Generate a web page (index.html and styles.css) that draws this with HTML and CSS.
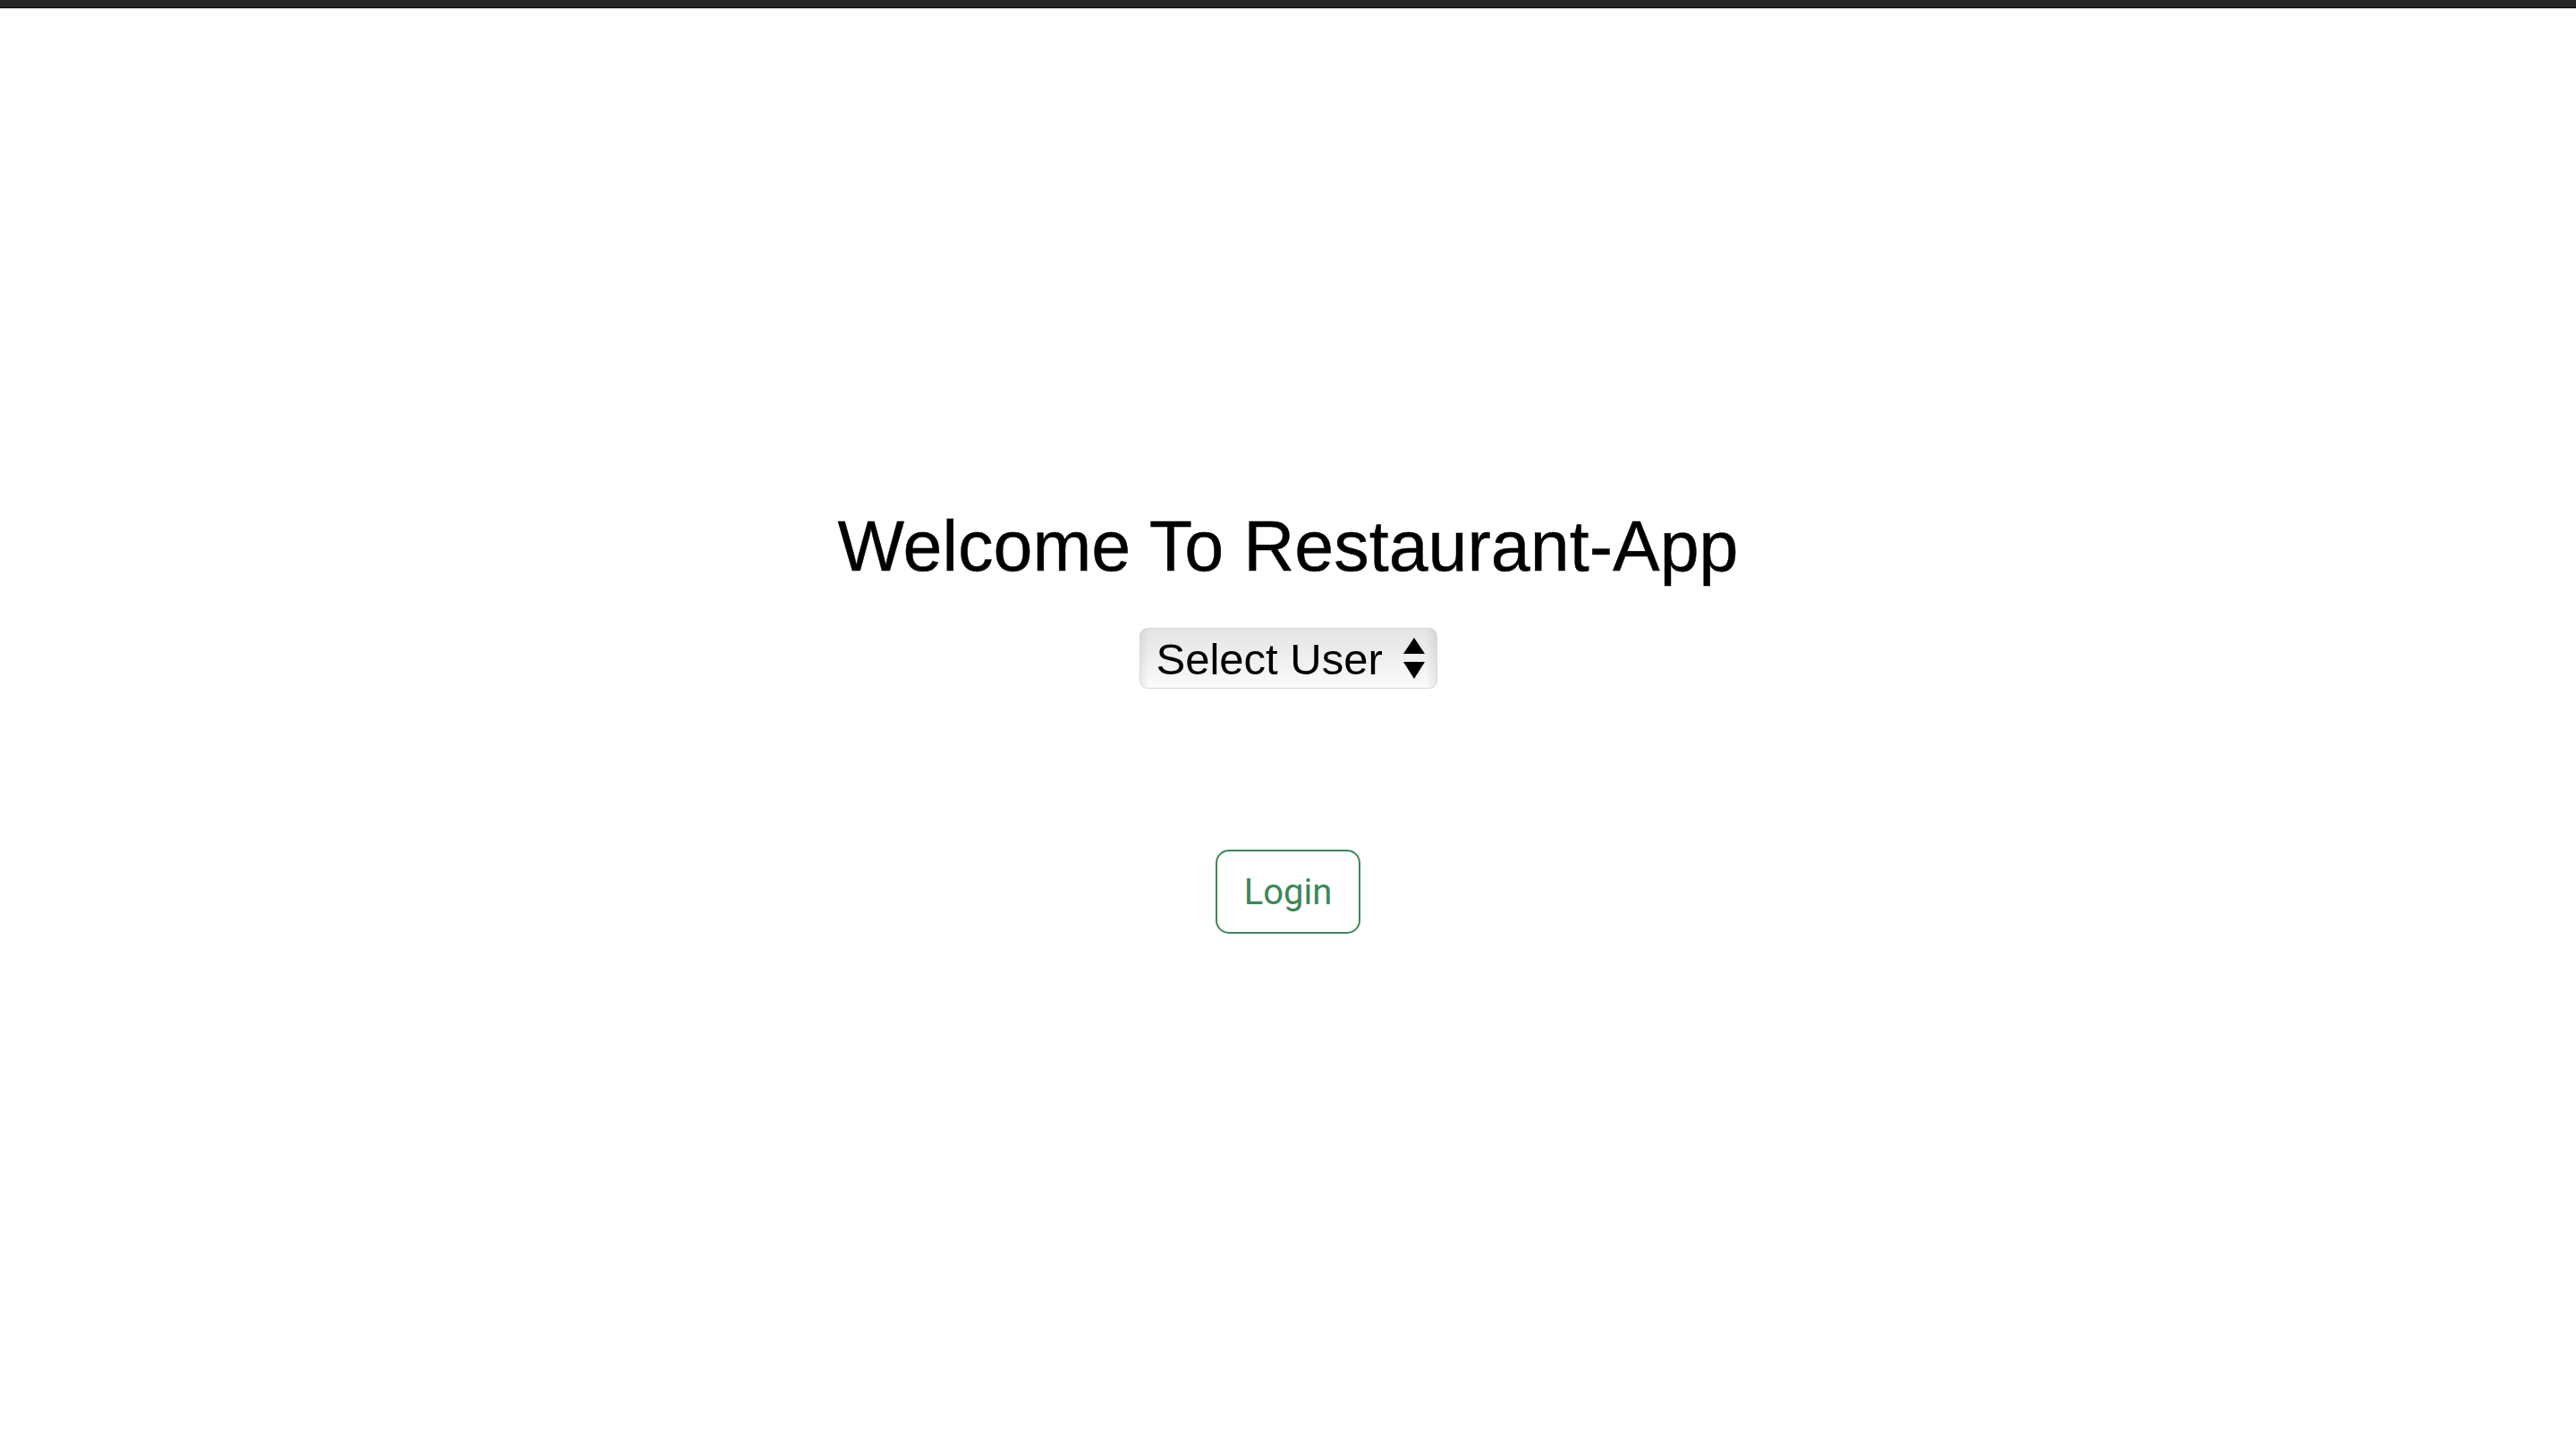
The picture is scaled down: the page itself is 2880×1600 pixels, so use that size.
FILE: index.html
```html
<!DOCTYPE html>
<html lang="en">
<head>
<meta charset="utf-8">
<title>Restaurant-App</title>
<link rel="stylesheet" href="styles.css">
</head>
<body>
<div class="topbar"></div>
<main class="page">
  <h1 class="title">Welcome To Restaurant-App</h1>
  <div class="select">
    <span class="select-label">Select User</span>
    <svg class="select-arrows" width="24" height="46" viewBox="0 0 24 46" aria-hidden="true">
      <polygon points="12,0 24,18 0,18" fill="#000"/>
      <polygon points="0,27 24,27 12,46" fill="#000"/>
    </svg>
  </div>
  <button class="login" type="button">Login</button>
</main>
</body>
</html>
```
FILE: styles.css
```css
html, body {
  margin: 0;
  padding: 0;
  background: #fff;
}

.topbar {
  height: 8px;
  background: #262626;
  border-bottom: 1px solid #000;
  box-shadow: 0 1px 0 #c4c4c4;
}

.page {
  height: 1591px;
  display: flex;
  flex-direction: column;
  align-items: center;
  justify-content: center;
}

.title {
  margin: 0;
  font-family: "Liberation Sans", Arial, sans-serif;
  font-weight: 400;
  font-size: 79px;
  line-height: 90px;
  color: #000;
  -webkit-text-stroke: 0.4px #000;
}

.select {
  margin-top: 46px;
  box-sizing: border-box;
  width: 333px;
  height: 68px;
  display: flex;
  align-items: center;
  justify-content: space-between;
  padding: 3px 13px 0 18px;
  border: 1px solid #d6d8da;
  border-radius: 9px;
  background:
    linear-gradient(to right, rgba(0,0,0,0.06), rgba(0,0,0,0) 10px, rgba(0,0,0,0) calc(100% - 12px), rgba(0,0,0,0.07)),
    linear-gradient(to bottom, #e4e4e4, #f0f0f0 55%, #fbfbfb);
}

.select-label {
  font-family: "Liberation Sans", Arial, sans-serif;
  font-size: 49px;
  line-height: 55px;
  color: #000;
}

.select-arrows {
  display: block;
  margin-top: -3px;
}

.login {
  margin-top: 180px;
  box-sizing: border-box;
  padding: 16px 30px 14px;
  border: 2px solid #3d8759;
  border-radius: 15px;
  background: #fff;
  color: #3d8759;
  font-family: Roboto, "Noto Sans", sans-serif;
  font-size: 40px;
  line-height: 60px;
  cursor: pointer;
}
```
